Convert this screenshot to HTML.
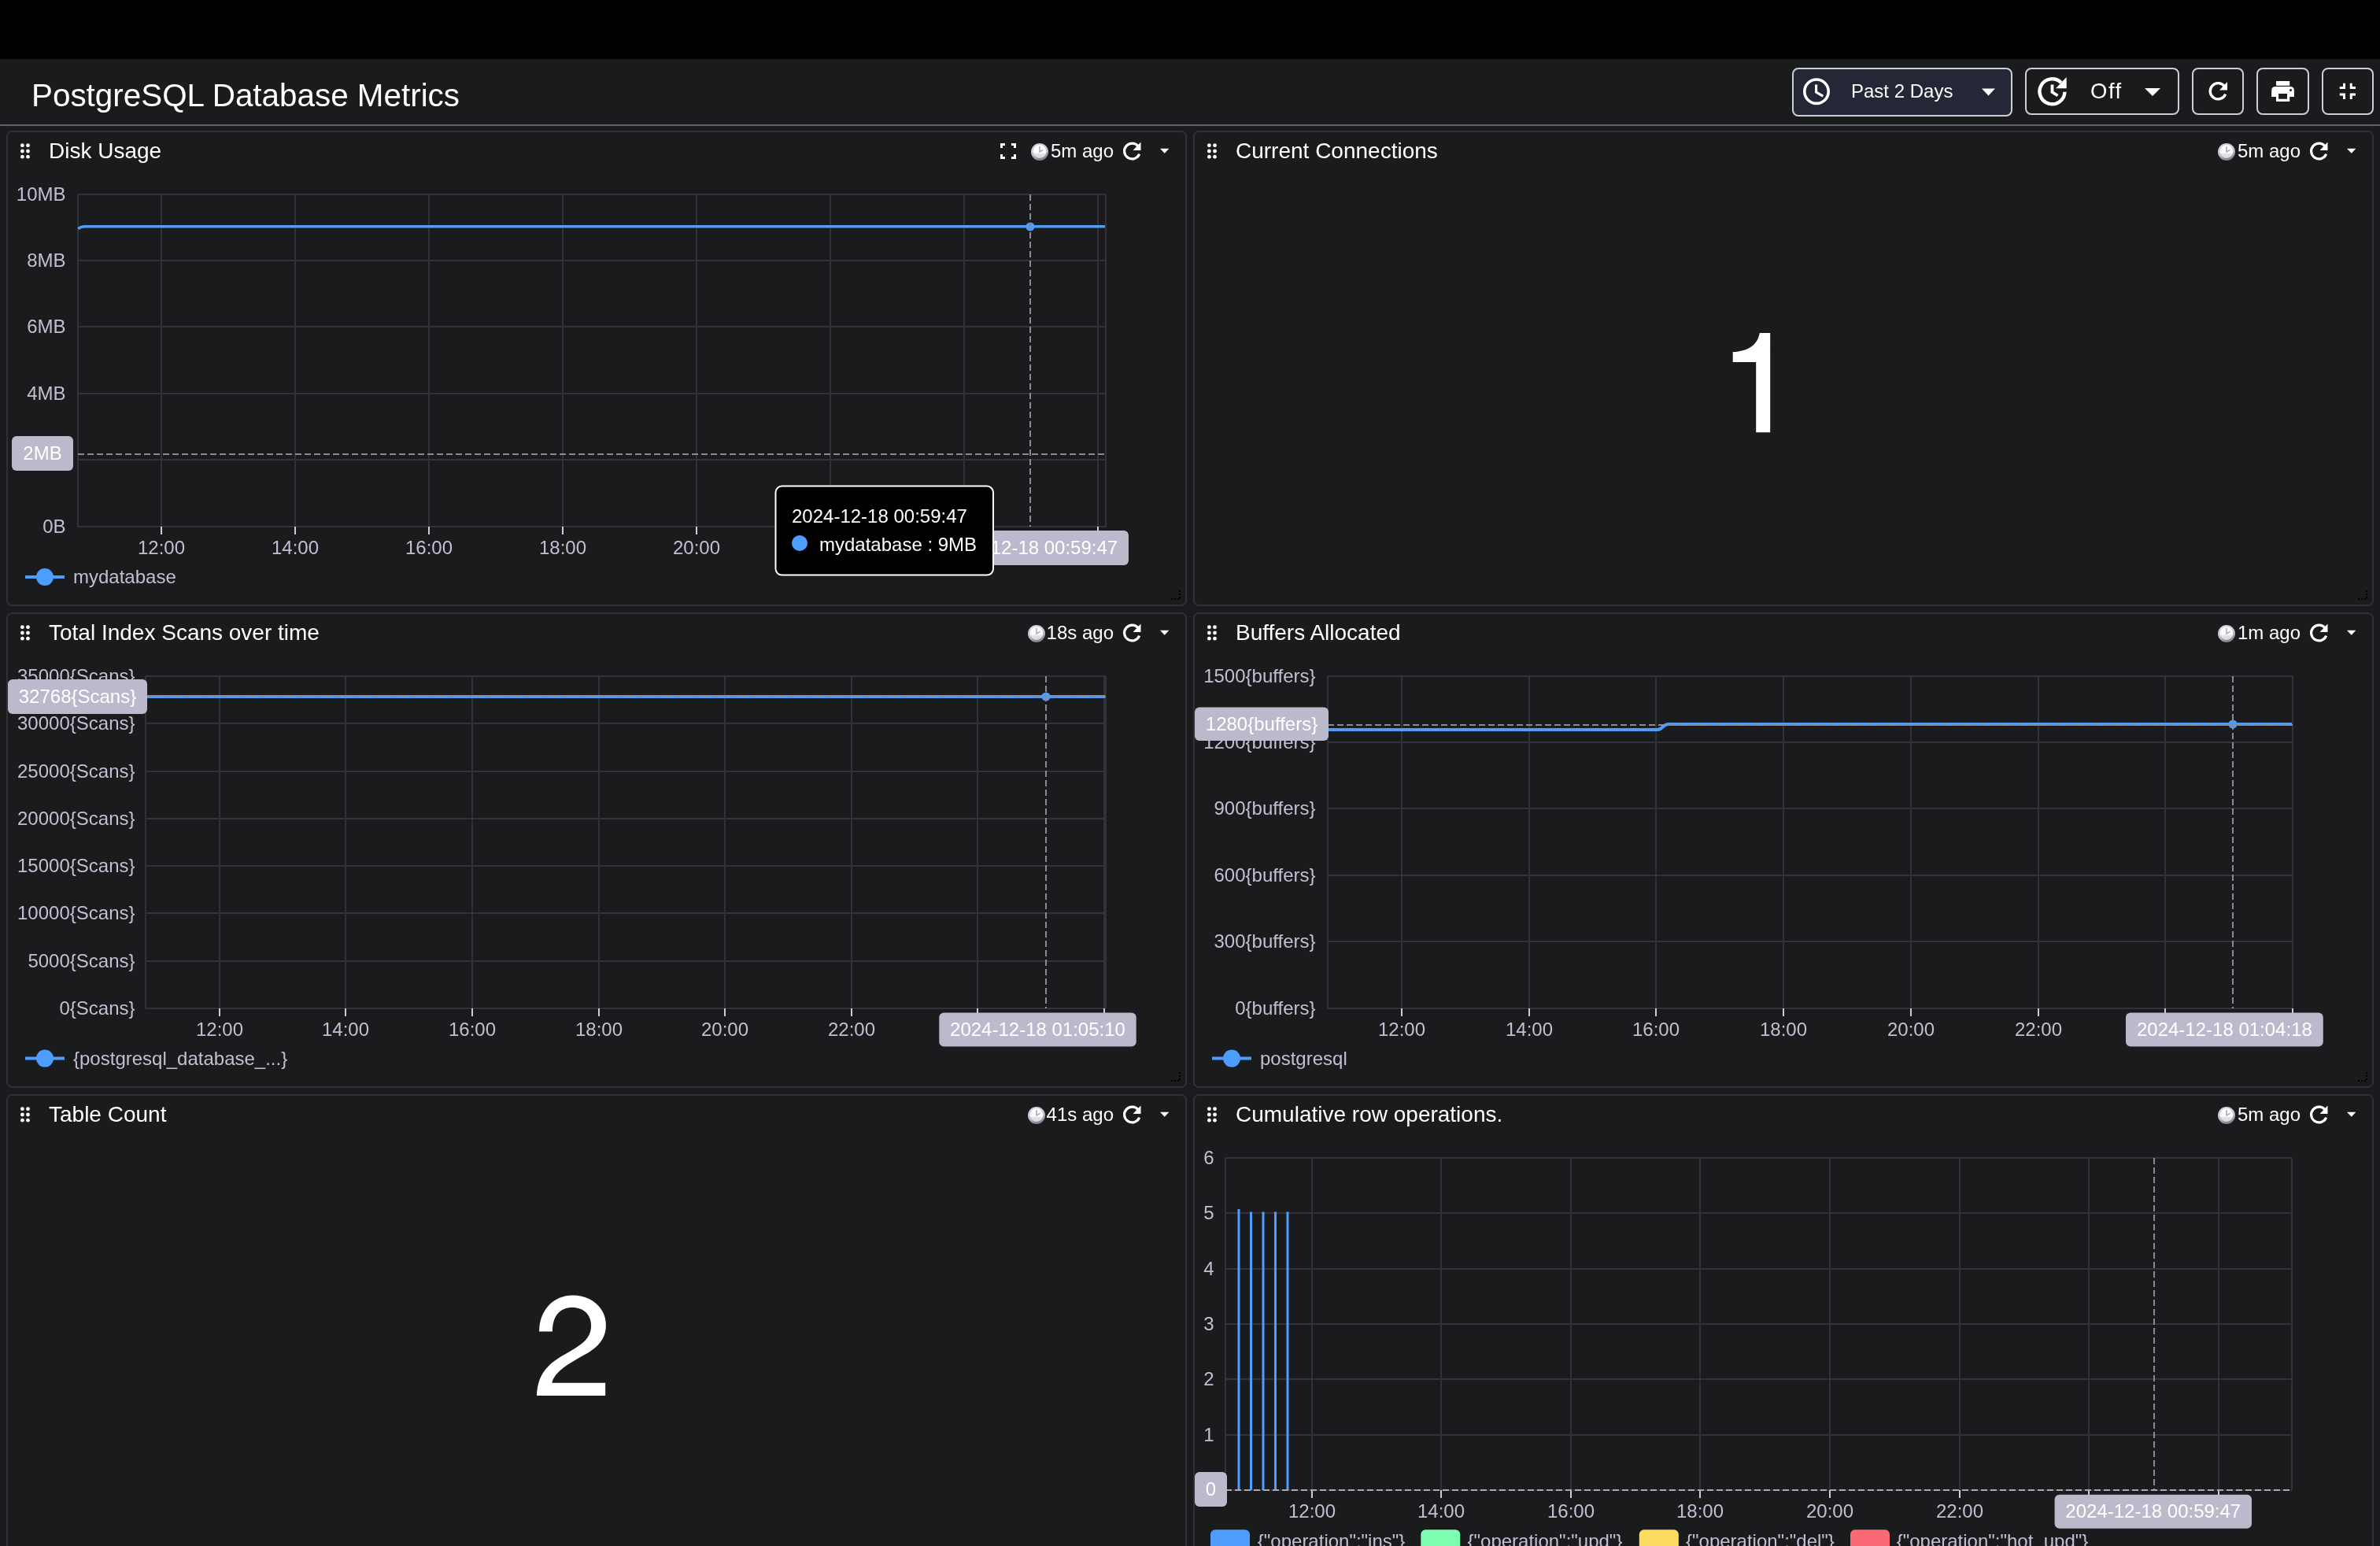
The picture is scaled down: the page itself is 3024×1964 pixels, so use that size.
<!DOCTYPE html>
<html><head><meta charset="utf-8"><style>html,body{margin:0;padding:0;width:3024px;height:1964px;overflow:hidden;background:#1a1b1d}</style></head><body>
<svg width="3024" height="1964" viewBox="0 0 3024 1964" style="position:absolute;left:0;top:0;will-change:transform">
<defs><linearGradient id="emoring" x1="0" y1="0" x2="0.3" y2="1"><stop offset="0" stop-color="#d4d3e2"/><stop offset="0.6" stop-color="#c4c3d2"/><stop offset="1" stop-color="#858492"/></linearGradient><linearGradient id="emoface" x1="0" y1="0" x2="0" y2="1"><stop offset="0" stop-color="#ffffff"/><stop offset="0.55" stop-color="#ffffff"/><stop offset="0.7" stop-color="#e2e2e6"/><stop offset="1" stop-color="#d6d6dc"/></linearGradient><radialGradient id="emo" cx="0.5" cy="0.4" r="0.6"><stop offset="0" stop-color="#ffffff"/><stop offset="0.5" stop-color="#f4f4f8"/><stop offset="0.8" stop-color="#d2d1dc"/><stop offset="1" stop-color="#8e8d9c"/></radialGradient></defs>
<g font-family="Liberation Sans, sans-serif">
<rect x="0" y="0" width="3024" height="1964" fill="#1a1b1d" rx="0" />
<rect x="0" y="0" width="3024" height="75" fill="#000" rx="0" />
<rect x="0" y="158" width="3024" height="2" fill="#5e6066" rx="0" />
<text x="40" y="135" font-size="40.4" fill="#fff" text-anchor="start" >PostgreSQL Database Metrics</text>
<rect x="2278" y="87" width="278" height="60" rx="7" fill="#232736" stroke="#cfced8" stroke-width="2"/>
<rect x="2574" y="87" width="194" height="58" rx="7" fill="#1a1b1d" stroke="#cfced8" stroke-width="2"/>
<rect x="2786" y="87" width="64" height="58" rx="7" fill="#1a1b1d" stroke="#cfced8" stroke-width="2"/>
<rect x="2868" y="87" width="65" height="58" rx="7" fill="#1a1b1d" stroke="#cfced8" stroke-width="2"/>
<rect x="2951" y="87" width="64" height="58" rx="7" fill="#1a1b1d" stroke="#cfced8" stroke-width="2"/>
<circle cx="2308" cy="116.2" r="15.2" fill="none" stroke="#fff" stroke-width="3.6"/>
<path d="M2307.6,107.5 V117 L2316.3,122.2" fill="none" stroke="#fff" stroke-width="3.1"/>
<text x="2352" y="124.4" font-size="24" fill="#fff" text-anchor="start" >Past 2 Days</text>
<path d="M2518,112.5 L2535,112.5 L2526.5,121.5 Z" fill="#fff"/>
<path d="M2623.49,116.76 A16,16 0 1 1 2618.81,104.89" fill="none" stroke="#fff" stroke-width="4.4"/>
<path d="M2625.7,97.9 L2625.7,112.2 L2612,112.2 Z" fill="#fff"/>
<path d="M2607.5,107.5 V117 L2614.5,121.5" fill="none" stroke="#fff" stroke-width="3.8"/>
<text x="2656" y="125" font-size="27.5" fill="#fff" text-anchor="start" letter-spacing="1.5">Off</text>
<path d="M2725,112 L2745,112 L2735.0,122 Z" fill="#fff"/>
<path d="M2827.66,119.58 A10.1,10.1 0 1 1 2826.26,109.58" fill="none" stroke="#fff" stroke-width="3.3"/>
<path d="M2830,104 L2830,114.5 L2820,114.5 Z" fill="#fff"/>
<rect x="2892" y="103" width="17.2" height="5.8" fill="#fff"/>
<path d="M2891.2,110 H2909.9 Q2914.9,110 2914.9,115 V123 H2909.2 V129 H2892 V123 H2886.2 V115 Q2886.2,110 2891.2,110 Z M2895.1,119 V125.8 H2906 V119 Z" fill="#fff" fill-rule="evenodd"/>
<circle cx="2910.5" cy="114.4" r="1.5" fill="#1b1c1f"/>
<path d="M2977,105.7 H2980 V113 H2972.8 V110.1 H2977 Z M2985.8,105.7 H2988.7 V110.1 H2993 V113 H2985.8 Z M2972.8,118.5 H2980 V126 H2977 V121.5 H2972.8 Z M2985.8,118.5 H2993 V121.5 H2988.7 V126 H2985.8 Z" fill="#fff"/>
<rect x="9" y="167" width="1498" height="602" rx="6" fill="#1a1b1d" stroke="#303137" stroke-width="2"/>
<circle cx="28.4" cy="184.7" r="2.4" fill="#fff"/>
<circle cx="28.4" cy="192" r="2.4" fill="#fff"/>
<circle cx="28.4" cy="199.2" r="2.4" fill="#fff"/>
<circle cx="35.5" cy="184.7" r="2.4" fill="#fff"/>
<circle cx="35.5" cy="192" r="2.4" fill="#fff"/>
<circle cx="35.5" cy="199.2" r="2.4" fill="#fff"/>
<text x="62" y="201.3" font-size="28" fill="#fff" text-anchor="start" >Disk Usage</text>
<path d="M1474,188.7 L1485.4,188.7 L1479.7,194.7 Z" fill="#fff"/>
<path d="M1447.68,195.71 A9.9,9.9 0 1 1 1446.30,185.90" fill="none" stroke="#fff" stroke-width="3.2"/>
<path d="M1449.5,180.6 L1449.5,191 L1439.5,191 Z" fill="#fff"/>
<text x="1415" y="200" font-size="24" fill="#fff" text-anchor="end" id="ago">5m ago</text>
<path d="M1499,750 V761 H1488" fill="none" stroke="#000" stroke-width="2" stroke-dasharray="2 2"/>
<path d="M1272.5,188 V183.5 H1277 M1285,183.5 H1289.5 V188 M1289.5,196 V200.5 H1285 M1277,200.5 H1272.5 V196" fill="none" stroke="#fff" stroke-width="3"/>
<circle cx="1321.0" cy="193.0" r="11.0" fill="url(#emoring)"/>
<circle cx="1321.0" cy="192.5" r="8.4" fill="url(#emoface)"/>
<path d="M1321.0,186.0 L1321.0,193.0 L1325.5,190.4" fill="none" stroke="#a9a8b4" stroke-width="1.5"/>
<rect x="1517" y="167" width="1498" height="602" rx="6" fill="#1a1b1d" stroke="#303137" stroke-width="2"/>
<circle cx="1536.4" cy="184.7" r="2.4" fill="#fff"/>
<circle cx="1536.4" cy="192" r="2.4" fill="#fff"/>
<circle cx="1536.4" cy="199.2" r="2.4" fill="#fff"/>
<circle cx="1543.5" cy="184.7" r="2.4" fill="#fff"/>
<circle cx="1543.5" cy="192" r="2.4" fill="#fff"/>
<circle cx="1543.5" cy="199.2" r="2.4" fill="#fff"/>
<text x="1570" y="201.3" font-size="28" fill="#fff" text-anchor="start" >Current Connections</text>
<path d="M2982,188.7 L2993.4,188.7 L2987.7,194.7 Z" fill="#fff"/>
<path d="M2955.68,195.71 A9.9,9.9 0 1 1 2954.30,185.90" fill="none" stroke="#fff" stroke-width="3.2"/>
<path d="M2957.5,180.6 L2957.5,191 L2947.5,191 Z" fill="#fff"/>
<text x="2923" y="200" font-size="24" fill="#fff" text-anchor="end" id="ago">5m ago</text>
<path d="M3007,750 V761 H2996" fill="none" stroke="#000" stroke-width="2" stroke-dasharray="2 2"/>
<circle cx="2829.0" cy="193.0" r="11.0" fill="url(#emoring)"/>
<circle cx="2829.0" cy="192.5" r="8.4" fill="url(#emoface)"/>
<path d="M2829.0,186.0 L2829.0,193.0 L2833.5,190.4" fill="none" stroke="#a9a8b4" stroke-width="1.5"/>
<rect x="9" y="779" width="1498" height="602" rx="6" fill="#1a1b1d" stroke="#303137" stroke-width="2"/>
<circle cx="28.4" cy="796.7" r="2.4" fill="#fff"/>
<circle cx="28.4" cy="804" r="2.4" fill="#fff"/>
<circle cx="28.4" cy="811.2" r="2.4" fill="#fff"/>
<circle cx="35.5" cy="796.7" r="2.4" fill="#fff"/>
<circle cx="35.5" cy="804" r="2.4" fill="#fff"/>
<circle cx="35.5" cy="811.2" r="2.4" fill="#fff"/>
<text x="62" y="813.3" font-size="28" fill="#fff" text-anchor="start" >Total Index Scans over time</text>
<path d="M1474,800.7 L1485.4,800.7 L1479.7,806.7 Z" fill="#fff"/>
<path d="M1447.68,807.71 A9.9,9.9 0 1 1 1446.30,797.90" fill="none" stroke="#fff" stroke-width="3.2"/>
<path d="M1449.5,792.6 L1449.5,803 L1439.5,803 Z" fill="#fff"/>
<text x="1415" y="812" font-size="24" fill="#fff" text-anchor="end" id="ago">18s ago</text>
<path d="M1499,1362 V1373 H1488" fill="none" stroke="#000" stroke-width="2" stroke-dasharray="2 2"/>
<circle cx="1317.0" cy="805.0" r="11.0" fill="url(#emoring)"/>
<circle cx="1317.0" cy="804.5" r="8.4" fill="url(#emoface)"/>
<path d="M1317.0,798.0 L1317.0,805.0 L1321.5,802.4" fill="none" stroke="#a9a8b4" stroke-width="1.5"/>
<rect x="1517" y="779" width="1498" height="602" rx="6" fill="#1a1b1d" stroke="#303137" stroke-width="2"/>
<circle cx="1536.4" cy="796.7" r="2.4" fill="#fff"/>
<circle cx="1536.4" cy="804" r="2.4" fill="#fff"/>
<circle cx="1536.4" cy="811.2" r="2.4" fill="#fff"/>
<circle cx="1543.5" cy="796.7" r="2.4" fill="#fff"/>
<circle cx="1543.5" cy="804" r="2.4" fill="#fff"/>
<circle cx="1543.5" cy="811.2" r="2.4" fill="#fff"/>
<text x="1570" y="813.3" font-size="28" fill="#fff" text-anchor="start" >Buffers Allocated</text>
<path d="M2982,800.7 L2993.4,800.7 L2987.7,806.7 Z" fill="#fff"/>
<path d="M2955.68,807.71 A9.9,9.9 0 1 1 2954.30,797.90" fill="none" stroke="#fff" stroke-width="3.2"/>
<path d="M2957.5,792.6 L2957.5,803 L2947.5,803 Z" fill="#fff"/>
<text x="2923" y="812" font-size="24" fill="#fff" text-anchor="end" id="ago">1m ago</text>
<path d="M3007,1362 V1373 H2996" fill="none" stroke="#000" stroke-width="2" stroke-dasharray="2 2"/>
<circle cx="2829.0" cy="805.0" r="11.0" fill="url(#emoring)"/>
<circle cx="2829.0" cy="804.5" r="8.4" fill="url(#emoface)"/>
<path d="M2829.0,798.0 L2829.0,805.0 L2833.5,802.4" fill="none" stroke="#a9a8b4" stroke-width="1.5"/>
<rect x="9" y="1391" width="1498" height="602" rx="6" fill="#1a1b1d" stroke="#303137" stroke-width="2"/>
<circle cx="28.4" cy="1408.7" r="2.4" fill="#fff"/>
<circle cx="28.4" cy="1416" r="2.4" fill="#fff"/>
<circle cx="28.4" cy="1423.2" r="2.4" fill="#fff"/>
<circle cx="35.5" cy="1408.7" r="2.4" fill="#fff"/>
<circle cx="35.5" cy="1416" r="2.4" fill="#fff"/>
<circle cx="35.5" cy="1423.2" r="2.4" fill="#fff"/>
<text x="62" y="1425.3" font-size="28" fill="#fff" text-anchor="start" >Table Count</text>
<path d="M1474,1412.7 L1485.4,1412.7 L1479.7,1418.7 Z" fill="#fff"/>
<path d="M1447.68,1419.71 A9.9,9.9 0 1 1 1446.30,1409.90" fill="none" stroke="#fff" stroke-width="3.2"/>
<path d="M1449.5,1404.6 L1449.5,1415 L1439.5,1415 Z" fill="#fff"/>
<text x="1415" y="1424" font-size="24" fill="#fff" text-anchor="end" id="ago">41s ago</text>
<circle cx="1317.0" cy="1417.0" r="11.0" fill="url(#emoring)"/>
<circle cx="1317.0" cy="1416.5" r="8.4" fill="url(#emoface)"/>
<path d="M1317.0,1410.0 L1317.0,1417.0 L1321.5,1414.4" fill="none" stroke="#a9a8b4" stroke-width="1.5"/>
<rect x="1517" y="1391" width="1498" height="602" rx="6" fill="#1a1b1d" stroke="#303137" stroke-width="2"/>
<circle cx="1536.4" cy="1408.7" r="2.4" fill="#fff"/>
<circle cx="1536.4" cy="1416" r="2.4" fill="#fff"/>
<circle cx="1536.4" cy="1423.2" r="2.4" fill="#fff"/>
<circle cx="1543.5" cy="1408.7" r="2.4" fill="#fff"/>
<circle cx="1543.5" cy="1416" r="2.4" fill="#fff"/>
<circle cx="1543.5" cy="1423.2" r="2.4" fill="#fff"/>
<text x="1570" y="1425.3" font-size="28" fill="#fff" text-anchor="start" >Cumulative row operations.</text>
<path d="M2982,1412.7 L2993.4,1412.7 L2987.7,1418.7 Z" fill="#fff"/>
<path d="M2955.68,1419.71 A9.9,9.9 0 1 1 2954.30,1409.90" fill="none" stroke="#fff" stroke-width="3.2"/>
<path d="M2957.5,1404.6 L2957.5,1415 L2947.5,1415 Z" fill="#fff"/>
<text x="2923" y="1424" font-size="24" fill="#fff" text-anchor="end" id="ago">5m ago</text>
<circle cx="2829.0" cy="1417.0" r="11.0" fill="url(#emoring)"/>
<circle cx="2829.0" cy="1416.5" r="8.4" fill="url(#emoface)"/>
<path d="M2829.0,1410.0 L2829.0,1417.0 L2833.5,1414.4" fill="none" stroke="#a9a8b4" stroke-width="1.5"/>
<line x1="99" y1="247" x2="1405" y2="247" stroke="#323339" stroke-width="2"/>
<line x1="99" y1="331" x2="1405" y2="331" stroke="#323339" stroke-width="2"/>
<line x1="99" y1="415" x2="1405" y2="415" stroke="#323339" stroke-width="2"/>
<line x1="99" y1="500" x2="1405" y2="500" stroke="#323339" stroke-width="2"/>
<line x1="99" y1="584" x2="1405" y2="584" stroke="#323339" stroke-width="2"/>
<line x1="99" y1="669" x2="1405" y2="669" stroke="#323339" stroke-width="2"/>
<line x1="205" y1="247" x2="205" y2="669" stroke="#323339" stroke-width="2"/>
<line x1="375" y1="247" x2="375" y2="669" stroke="#323339" stroke-width="2"/>
<line x1="545" y1="247" x2="545" y2="669" stroke="#323339" stroke-width="2"/>
<line x1="715" y1="247" x2="715" y2="669" stroke="#323339" stroke-width="2"/>
<line x1="885" y1="247" x2="885" y2="669" stroke="#323339" stroke-width="2"/>
<line x1="1055" y1="247" x2="1055" y2="669" stroke="#323339" stroke-width="2"/>
<line x1="1225" y1="247" x2="1225" y2="669" stroke="#323339" stroke-width="2"/>
<line x1="1395" y1="247" x2="1395" y2="669" stroke="#323339" stroke-width="2"/>
<line x1="99" y1="247" x2="99" y2="669" stroke="#323339" stroke-width="2"/>
<line x1="1405" y1="247" x2="1405" y2="669" stroke="#323339" stroke-width="2"/>
<line x1="205" y1="669" x2="205" y2="679" stroke="#cdcbe0" stroke-width="2"/>
<line x1="375" y1="669" x2="375" y2="679" stroke="#cdcbe0" stroke-width="2"/>
<line x1="545" y1="669" x2="545" y2="679" stroke="#cdcbe0" stroke-width="2"/>
<line x1="715" y1="669" x2="715" y2="679" stroke="#cdcbe0" stroke-width="2"/>
<line x1="885" y1="669" x2="885" y2="679" stroke="#cdcbe0" stroke-width="2"/>
<line x1="1055" y1="669" x2="1055" y2="679" stroke="#cdcbe0" stroke-width="2"/>
<line x1="1225" y1="669" x2="1225" y2="679" stroke="#cdcbe0" stroke-width="2"/>
<line x1="1395" y1="669" x2="1395" y2="679" stroke="#cdcbe0" stroke-width="2"/>
<text x="83.5" y="254.6" font-size="24" fill="#c1bfd2" text-anchor="end" >10MB</text>
<text x="83.5" y="338.6" font-size="24" fill="#c1bfd2" text-anchor="end" >8MB</text>
<text x="83.5" y="422.6" font-size="24" fill="#c1bfd2" text-anchor="end" >6MB</text>
<text x="83.5" y="507.6" font-size="24" fill="#c1bfd2" text-anchor="end" >4MB</text>
<text x="83.5" y="591.6" font-size="24" fill="#c1bfd2" text-anchor="end" >2MB</text>
<text x="83.5" y="676.6" font-size="24" fill="#c1bfd2" text-anchor="end" >0B</text>
<text x="205" y="704" font-size="24" fill="#c1bfd2" text-anchor="middle" >12:00</text>
<text x="375" y="704" font-size="24" fill="#c1bfd2" text-anchor="middle" >14:00</text>
<text x="545" y="704" font-size="24" fill="#c1bfd2" text-anchor="middle" >16:00</text>
<text x="715" y="704" font-size="24" fill="#c1bfd2" text-anchor="middle" >18:00</text>
<text x="885" y="704" font-size="24" fill="#c1bfd2" text-anchor="middle" >20:00</text>
<text x="1055" y="704" font-size="24" fill="#c1bfd2" text-anchor="middle" >22:00</text>
<text x="1225" y="704" font-size="24" fill="#c1bfd2" text-anchor="middle" >00:00</text>
<path d="M99.5,290.8 C101,289 103,287.7 108,287.7 L1404,287.7" fill="none" stroke="#4d9dfe" stroke-width="3.5"/>
<circle cx="1309" cy="288" r="5.6" fill="#4d9dfe"/>
<line x1="1309" y1="247" x2="1309" y2="669" stroke="#8a8a94" stroke-width="2" stroke-dasharray="8 4"/>
<line x1="99" y1="577" x2="1405" y2="577" stroke="#8a8a94" stroke-width="2" stroke-dasharray="8 4"/>
<rect x="15" y="554" width="78" height="44" fill="#bcb9cc" rx="6" />
<text x="54.0" y="583.8" font-size="24" fill="#fff" text-anchor="middle" >2MB</text>
<rect x="1183.5" y="674" width="250.5" height="44" fill="#bcb9cc" rx="6" />
<text x="1308.75" y="703.8" font-size="24" fill="#fff" text-anchor="middle" >2024-12-18 00:59:47</text>
<line x1="32" y1="733" x2="82" y2="733" stroke="#4d9dfe" stroke-width="4"/>
<circle cx="57" cy="733" r="11" fill="#4d9dfe"/>
<text x="93" y="741.3" font-size="24" fill="#c1bfd2" text-anchor="start" >mydatabase</text>
<path d="M2249.2,422.9 L2249.2,549.2 L2231.2,549.2 L2231.2,459.9 L2201.7,459.9 L2201.7,447.1 C2222,446 2233,438 2235.8,422.9 Z" fill="#fff"/>
<line x1="185" y1="859" x2="1405" y2="859" stroke="#323339" stroke-width="2"/>
<line x1="185" y1="919" x2="1405" y2="919" stroke="#323339" stroke-width="2"/>
<line x1="185" y1="980" x2="1405" y2="980" stroke="#323339" stroke-width="2"/>
<line x1="185" y1="1040" x2="1405" y2="1040" stroke="#323339" stroke-width="2"/>
<line x1="185" y1="1100" x2="1405" y2="1100" stroke="#323339" stroke-width="2"/>
<line x1="185" y1="1160" x2="1405" y2="1160" stroke="#323339" stroke-width="2"/>
<line x1="185" y1="1221" x2="1405" y2="1221" stroke="#323339" stroke-width="2"/>
<line x1="185" y1="1281" x2="1405" y2="1281" stroke="#323339" stroke-width="2"/>
<line x1="279" y1="859" x2="279" y2="1281" stroke="#323339" stroke-width="2"/>
<line x1="439" y1="859" x2="439" y2="1281" stroke="#323339" stroke-width="2"/>
<line x1="600" y1="859" x2="600" y2="1281" stroke="#323339" stroke-width="2"/>
<line x1="761" y1="859" x2="761" y2="1281" stroke="#323339" stroke-width="2"/>
<line x1="921" y1="859" x2="921" y2="1281" stroke="#323339" stroke-width="2"/>
<line x1="1082" y1="859" x2="1082" y2="1281" stroke="#323339" stroke-width="2"/>
<line x1="1242" y1="859" x2="1242" y2="1281" stroke="#323339" stroke-width="2"/>
<line x1="1403" y1="859" x2="1403" y2="1281" stroke="#323339" stroke-width="2"/>
<line x1="185" y1="859" x2="185" y2="1281" stroke="#323339" stroke-width="2"/>
<line x1="1405" y1="859" x2="1405" y2="1281" stroke="#323339" stroke-width="2"/>
<line x1="279" y1="1281" x2="279" y2="1291" stroke="#cdcbe0" stroke-width="2"/>
<line x1="439" y1="1281" x2="439" y2="1291" stroke="#cdcbe0" stroke-width="2"/>
<line x1="600" y1="1281" x2="600" y2="1291" stroke="#cdcbe0" stroke-width="2"/>
<line x1="761" y1="1281" x2="761" y2="1291" stroke="#cdcbe0" stroke-width="2"/>
<line x1="921" y1="1281" x2="921" y2="1291" stroke="#cdcbe0" stroke-width="2"/>
<line x1="1082" y1="1281" x2="1082" y2="1291" stroke="#cdcbe0" stroke-width="2"/>
<line x1="1242" y1="1281" x2="1242" y2="1291" stroke="#cdcbe0" stroke-width="2"/>
<line x1="1403" y1="1281" x2="1403" y2="1291" stroke="#cdcbe0" stroke-width="2"/>
<text x="171.5" y="866.6" font-size="24" fill="#c1bfd2" text-anchor="end" >35000{Scans}</text>
<text x="171.5" y="926.6" font-size="24" fill="#c1bfd2" text-anchor="end" >30000{Scans}</text>
<text x="171.5" y="987.6" font-size="24" fill="#c1bfd2" text-anchor="end" >25000{Scans}</text>
<text x="171.5" y="1047.6" font-size="24" fill="#c1bfd2" text-anchor="end" >20000{Scans}</text>
<text x="171.5" y="1107.6" font-size="24" fill="#c1bfd2" text-anchor="end" >15000{Scans}</text>
<text x="171.5" y="1167.6" font-size="24" fill="#c1bfd2" text-anchor="end" >10000{Scans}</text>
<text x="171.5" y="1228.6" font-size="24" fill="#c1bfd2" text-anchor="end" >5000{Scans}</text>
<text x="171.5" y="1288.6" font-size="24" fill="#c1bfd2" text-anchor="end" >0{Scans}</text>
<text x="279" y="1316" font-size="24" fill="#c1bfd2" text-anchor="middle" >12:00</text>
<text x="439" y="1316" font-size="24" fill="#c1bfd2" text-anchor="middle" >14:00</text>
<text x="600" y="1316" font-size="24" fill="#c1bfd2" text-anchor="middle" >16:00</text>
<text x="761" y="1316" font-size="24" fill="#c1bfd2" text-anchor="middle" >18:00</text>
<text x="921" y="1316" font-size="24" fill="#c1bfd2" text-anchor="middle" >20:00</text>
<text x="1082" y="1316" font-size="24" fill="#c1bfd2" text-anchor="middle" >22:00</text>
<text x="1242" y="1316" font-size="24" fill="#c1bfd2" text-anchor="middle" >00:00</text>
<path d="M185,885 L1404,885" fill="none" stroke="#4d9dfe" stroke-width="4"/>
<circle cx="1329" cy="885" r="5.6" fill="#4d9dfe"/>
<line x1="1329" y1="859" x2="1329" y2="1281" stroke="#8a8a94" stroke-width="2" stroke-dasharray="8 4"/>
<line x1="185" y1="885" x2="1405" y2="885" stroke="#8a8a94" stroke-width="2" stroke-dasharray="8 4"/>
<rect x="10" y="863" width="177" height="44" fill="#bcb9cc" rx="6" />
<text x="98.5" y="892.8" font-size="24" fill="#fff" text-anchor="middle" >32768{Scans}</text>
<rect x="1193.3" y="1286.5" width="250.4000000000001" height="43.09999999999991" fill="#bcb9cc" rx="6" />
<text x="1318.5" y="1315.85" font-size="24" fill="#fff" text-anchor="middle" >2024-12-18 01:05:10</text>
<line x1="32" y1="1344.6" x2="82" y2="1344.6" stroke="#4d9dfe" stroke-width="4"/>
<circle cx="57" cy="1344.6" r="11" fill="#4d9dfe"/>
<text x="93" y="1353.3" font-size="24" fill="#c1bfd2" text-anchor="start" >{postgresql_database_...}</text>
<line x1="1687" y1="859" x2="2913" y2="859" stroke="#323339" stroke-width="2"/>
<line x1="1687" y1="943" x2="2913" y2="943" stroke="#323339" stroke-width="2"/>
<line x1="1687" y1="1027" x2="2913" y2="1027" stroke="#323339" stroke-width="2"/>
<line x1="1687" y1="1112" x2="2913" y2="1112" stroke="#323339" stroke-width="2"/>
<line x1="1687" y1="1196" x2="2913" y2="1196" stroke="#323339" stroke-width="2"/>
<line x1="1687" y1="1281" x2="2913" y2="1281" stroke="#323339" stroke-width="2"/>
<line x1="1781" y1="859" x2="1781" y2="1281" stroke="#323339" stroke-width="2"/>
<line x1="1943" y1="859" x2="1943" y2="1281" stroke="#323339" stroke-width="2"/>
<line x1="2104" y1="859" x2="2104" y2="1281" stroke="#323339" stroke-width="2"/>
<line x1="2266" y1="859" x2="2266" y2="1281" stroke="#323339" stroke-width="2"/>
<line x1="2428" y1="859" x2="2428" y2="1281" stroke="#323339" stroke-width="2"/>
<line x1="2590" y1="859" x2="2590" y2="1281" stroke="#323339" stroke-width="2"/>
<line x1="2751" y1="859" x2="2751" y2="1281" stroke="#323339" stroke-width="2"/>
<line x1="2913" y1="859" x2="2913" y2="1281" stroke="#323339" stroke-width="2"/>
<line x1="1687" y1="859" x2="1687" y2="1281" stroke="#323339" stroke-width="2"/>
<line x1="2913" y1="859" x2="2913" y2="1281" stroke="#323339" stroke-width="2"/>
<line x1="1781" y1="1281" x2="1781" y2="1291" stroke="#cdcbe0" stroke-width="2"/>
<line x1="1943" y1="1281" x2="1943" y2="1291" stroke="#cdcbe0" stroke-width="2"/>
<line x1="2104" y1="1281" x2="2104" y2="1291" stroke="#cdcbe0" stroke-width="2"/>
<line x1="2266" y1="1281" x2="2266" y2="1291" stroke="#cdcbe0" stroke-width="2"/>
<line x1="2428" y1="1281" x2="2428" y2="1291" stroke="#cdcbe0" stroke-width="2"/>
<line x1="2590" y1="1281" x2="2590" y2="1291" stroke="#cdcbe0" stroke-width="2"/>
<line x1="2751" y1="1281" x2="2751" y2="1291" stroke="#cdcbe0" stroke-width="2"/>
<line x1="2913" y1="1281" x2="2913" y2="1291" stroke="#cdcbe0" stroke-width="2"/>
<text x="1671.5" y="866.6" font-size="24" fill="#c1bfd2" text-anchor="end" >1500{buffers}</text>
<text x="1671.5" y="950.6" font-size="24" fill="#c1bfd2" text-anchor="end" >1200{buffers}</text>
<text x="1671.5" y="1034.6" font-size="24" fill="#c1bfd2" text-anchor="end" >900{buffers}</text>
<text x="1671.5" y="1119.6" font-size="24" fill="#c1bfd2" text-anchor="end" >600{buffers}</text>
<text x="1671.5" y="1203.6" font-size="24" fill="#c1bfd2" text-anchor="end" >300{buffers}</text>
<text x="1671.5" y="1288.6" font-size="24" fill="#c1bfd2" text-anchor="end" >0{buffers}</text>
<text x="1781" y="1316" font-size="24" fill="#c1bfd2" text-anchor="middle" >12:00</text>
<text x="1943" y="1316" font-size="24" fill="#c1bfd2" text-anchor="middle" >14:00</text>
<text x="2104" y="1316" font-size="24" fill="#c1bfd2" text-anchor="middle" >16:00</text>
<text x="2266" y="1316" font-size="24" fill="#c1bfd2" text-anchor="middle" >18:00</text>
<text x="2428" y="1316" font-size="24" fill="#c1bfd2" text-anchor="middle" >20:00</text>
<text x="2590" y="1316" font-size="24" fill="#c1bfd2" text-anchor="middle" >22:00</text>
<text x="2751" y="1316" font-size="24" fill="#c1bfd2" text-anchor="middle" >00:00</text>
<path d="M1687,927 L2106,927 C2112,927 2113,920 2120,920 L2912,920" fill="none" stroke="#4d9dfe" stroke-width="4"/>
<circle cx="2837" cy="920" r="5.6" fill="#4d9dfe"/>
<line x1="2837" y1="859" x2="2837" y2="1281" stroke="#8a8a94" stroke-width="2" stroke-dasharray="8 4"/>
<line x1="1687" y1="921" x2="2913" y2="921" stroke="#8a8a94" stroke-width="2" stroke-dasharray="8 4"/>
<rect x="1518" y="898.5" width="170" height="42.5" fill="#bcb9cc" rx="6" />
<text x="1603.0" y="927.55" font-size="24" fill="#fff" text-anchor="middle" >1280{buffers}</text>
<rect x="2701" y="1286.6" width="250.80000000000018" height="42.80000000000018" fill="#bcb9cc" rx="6" />
<text x="2826.4" y="1315.8" font-size="24" fill="#fff" text-anchor="middle" >2024-12-18 01:04:18</text>
<line x1="1540" y1="1344.6" x2="1590" y2="1344.6" stroke="#4d9dfe" stroke-width="4"/>
<circle cx="1565" cy="1344.6" r="11" fill="#4d9dfe"/>
<text x="1601" y="1353.3" font-size="24" fill="#c1bfd2" text-anchor="start" >postgresql</text>
<path d="M685.14,1691.57 C685.14,1664.15 703.46,1645.52 727.78,1645.52 C751.06,1645.52 769.89,1661.04 769.89,1683.29 C769.89,1701.40 759.34,1711.75 742.78,1721.06 C726.23,1730.37 704.50,1741.75 701.39,1756.76 L769.17,1756.76 L769.17,1773.11 L682.04,1773.11 C682.76,1749.00 693.11,1734.51 715.88,1721.58 C738.64,1708.64 751.06,1701.40 751.06,1683.81 C751.06,1670.36 741.75,1661.04 727.26,1661.04 C711.74,1661.04 701.91,1671.39 701.91,1691.57 Z" fill="#fff"/>
<line x1="1557" y1="1471" x2="2912" y2="1471" stroke="#323339" stroke-width="2"/>
<line x1="1557" y1="1541" x2="2912" y2="1541" stroke="#323339" stroke-width="2"/>
<line x1="1557" y1="1612" x2="2912" y2="1612" stroke="#323339" stroke-width="2"/>
<line x1="1557" y1="1682" x2="2912" y2="1682" stroke="#323339" stroke-width="2"/>
<line x1="1557" y1="1752" x2="2912" y2="1752" stroke="#323339" stroke-width="2"/>
<line x1="1557" y1="1823" x2="2912" y2="1823" stroke="#323339" stroke-width="2"/>
<line x1="1557" y1="1893" x2="2912" y2="1893" stroke="#323339" stroke-width="2"/>
<line x1="1667" y1="1471" x2="1667" y2="1893" stroke="#323339" stroke-width="2"/>
<line x1="1831" y1="1471" x2="1831" y2="1893" stroke="#323339" stroke-width="2"/>
<line x1="1996" y1="1471" x2="1996" y2="1893" stroke="#323339" stroke-width="2"/>
<line x1="2160" y1="1471" x2="2160" y2="1893" stroke="#323339" stroke-width="2"/>
<line x1="2325" y1="1471" x2="2325" y2="1893" stroke="#323339" stroke-width="2"/>
<line x1="2490" y1="1471" x2="2490" y2="1893" stroke="#323339" stroke-width="2"/>
<line x1="2654" y1="1471" x2="2654" y2="1893" stroke="#323339" stroke-width="2"/>
<line x1="2819" y1="1471" x2="2819" y2="1893" stroke="#323339" stroke-width="2"/>
<line x1="1557" y1="1471" x2="1557" y2="1893" stroke="#323339" stroke-width="2"/>
<line x1="2912" y1="1471" x2="2912" y2="1893" stroke="#323339" stroke-width="2"/>
<line x1="1667" y1="1893" x2="1667" y2="1903" stroke="#cdcbe0" stroke-width="2"/>
<line x1="1831" y1="1893" x2="1831" y2="1903" stroke="#cdcbe0" stroke-width="2"/>
<line x1="1996" y1="1893" x2="1996" y2="1903" stroke="#cdcbe0" stroke-width="2"/>
<line x1="2160" y1="1893" x2="2160" y2="1903" stroke="#cdcbe0" stroke-width="2"/>
<line x1="2325" y1="1893" x2="2325" y2="1903" stroke="#cdcbe0" stroke-width="2"/>
<line x1="2490" y1="1893" x2="2490" y2="1903" stroke="#cdcbe0" stroke-width="2"/>
<line x1="2654" y1="1893" x2="2654" y2="1903" stroke="#cdcbe0" stroke-width="2"/>
<line x1="2819" y1="1893" x2="2819" y2="1903" stroke="#cdcbe0" stroke-width="2"/>
<text x="1542.5" y="1478.6" font-size="24" fill="#c1bfd2" text-anchor="end" >6</text>
<text x="1542.5" y="1548.6" font-size="24" fill="#c1bfd2" text-anchor="end" >5</text>
<text x="1542.5" y="1619.6" font-size="24" fill="#c1bfd2" text-anchor="end" >4</text>
<text x="1542.5" y="1689.6" font-size="24" fill="#c1bfd2" text-anchor="end" >3</text>
<text x="1542.5" y="1759.6" font-size="24" fill="#c1bfd2" text-anchor="end" >2</text>
<text x="1542.5" y="1830.6" font-size="24" fill="#c1bfd2" text-anchor="end" >1</text>
<text x="1667" y="1928.4" font-size="24" fill="#c1bfd2" text-anchor="middle" >12:00</text>
<text x="1831" y="1928.4" font-size="24" fill="#c1bfd2" text-anchor="middle" >14:00</text>
<text x="1996" y="1928.4" font-size="24" fill="#c1bfd2" text-anchor="middle" >16:00</text>
<text x="2160" y="1928.4" font-size="24" fill="#c1bfd2" text-anchor="middle" >18:00</text>
<text x="2325" y="1928.4" font-size="24" fill="#c1bfd2" text-anchor="middle" >20:00</text>
<text x="2490" y="1928.4" font-size="24" fill="#c1bfd2" text-anchor="middle" >22:00</text>
<text x="2654" y="1928.4" font-size="24" fill="#c1bfd2" text-anchor="middle" >00:00</text>
<line x1="1574" y1="1536" x2="1574" y2="1893" stroke="#4d9dfe" stroke-width="3"/>
<line x1="1589.5" y1="1539.5" x2="1589.5" y2="1893" stroke="#4d9dfe" stroke-width="3"/>
<line x1="1605" y1="1539.5" x2="1605" y2="1893" stroke="#4d9dfe" stroke-width="3"/>
<line x1="1620.5" y1="1539.5" x2="1620.5" y2="1893" stroke="#4d9dfe" stroke-width="3"/>
<line x1="1636" y1="1539.5" x2="1636" y2="1893" stroke="#4d9dfe" stroke-width="3"/>
<line x1="2737" y1="1471" x2="2737" y2="1893" stroke="#8a8a94" stroke-width="2" stroke-dasharray="8 4"/>
<line x1="1557" y1="1893" x2="2912" y2="1893" stroke="#a9a8b4" stroke-width="2" stroke-dasharray="8 4"/>
<rect x="1518" y="1870" width="41" height="44" fill="#bcb9cc" rx="6" />
<text x="1538.5" y="1899.8" font-size="24" fill="#fff" text-anchor="middle" >0</text>
<rect x="2610.6" y="1898.7" width="250.4000000000001" height="43.09999999999991" fill="#bcb9cc" rx="6" />
<text x="2735.8" y="1928.05" font-size="24" fill="#fff" text-anchor="middle" >2024-12-18 00:59:47</text>
<rect x="1538" y="1943.2" width="50" height="30" fill="#4e9cfe" rx="6" />
<text x="1597.8" y="1966" font-size="24" fill="#c1bfd2" text-anchor="start" >{"operation":"ins"}</text>
<rect x="1805.3" y="1943.2" width="50" height="30" fill="#7dfdb0" rx="6" />
<text x="1864.5" y="1966" font-size="24" fill="#c1bfd2" text-anchor="start" >{"operation":"upd"}</text>
<rect x="2082.8" y="1943.2" width="50" height="30" fill="#fddc62" rx="6" />
<text x="2142" y="1966" font-size="24" fill="#c1bfd2" text-anchor="start" >{"operation":"del"}</text>
<rect x="2351" y="1943.2" width="50" height="30" fill="#f96a75" rx="6" />
<text x="2409.7" y="1966" font-size="24" fill="#c1bfd2" text-anchor="start" >{"operation":"hot_upd"}</text>
<rect x="985.5" y="617.6" width="276.5" height="113" rx="8" fill="#000" stroke="#fff" stroke-width="2"/>
<text x="1006" y="664" font-size="24" fill="#fff" text-anchor="start" >2024-12-18 00:59:47</text>
<circle cx="1016" cy="690" r="10" fill="#4d9dfe"/>
<text x="1041" y="700" font-size="24" fill="#fff" text-anchor="start" >mydatabase : 9MB</text>
</g></svg>
</body></html>
